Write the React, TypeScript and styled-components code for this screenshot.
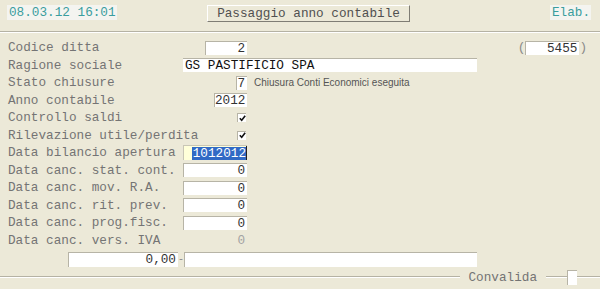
import { createGlobalStyle } from 'styled-components';
import styled from 'styled-components';

const GlobalStyle = createGlobalStyle`
  body {
    margin: 0;
    background: #ece9d8;
  }
`;

const MONO = `"Liberation Mono", "DejaVu Sans Mono", monospace`;

type RowData = {
  label: string;
  kind: 'box' | 'check' | 'plain' | 'wide' | 'selected';
  value?: string;
  width?: number;
  note?: string;
  side?: string;
};

const rows: RowData[] = [
  { label: 'Codice ditta', kind: 'box', value: '2', width: 42, side: '5455' },
  { label: 'Ragione sociale', kind: 'wide', value: 'GS PASTIFICIO SPA' },
  { label: 'Stato chiusure', kind: 'box', value: '7', width: 11, note: 'Chiusura Conti Economici eseguita' },
  { label: 'Anno contabile', kind: 'box', value: '2012', width: 33 },
  { label: 'Controllo saldi', kind: 'check' },
  { label: 'Rilevazione utile/perdita', kind: 'check' },
  { label: 'Data bilancio apertura', kind: 'selected', value: '1012012' },
  { label: 'Data canc. stat. cont.', kind: 'box', value: '0', width: 64 },
  { label: 'Data canc. mov. R.A.', kind: 'box', value: '0', width: 64 },
  { label: 'Data canc. rit. prev.', kind: 'box', value: '0', width: 64 },
  { label: 'Data canc. prog.fisc.', kind: 'box', value: '0', width: 64 },
  { label: 'Data canc. vers. IVA', kind: 'plain', value: '0' },
];

export default function App() {
  return (
    <>
      <GlobalStyle />
      <Page>
        <Header>
          <InfoBox>08.03.12 16:01</InfoBox>
          <TitleButton>Passaggio anno contabile</TitleButton>
          <InfoBox $gap={140} $w={41}>
            Elab.
          </InfoBox>
        </Header>
        <Rule />
        <Form>
          {rows.map((row) => (
            <Row key={row.label}>
              <Label>{row.label}</Label>
              {row.kind === 'wide' ? (
                <WideField>{row.value}</WideField>
              ) : (
                <FieldCell>
                  {row.kind === 'box' && <Box $w={row.width ?? 64}>{row.value}</Box>}
                  {row.kind === 'plain' && <PlainValue>{row.value}</PlainValue>}
                  {row.kind === 'check' && (
                    <CheckBox>
                      <svg width="7" height="7" viewBox="0 0 7 7">
                        <path d="M0.8 3.2 L2.7 5.2 L6.2 0.8" fill="none" stroke="#111" strokeWidth="1.6" />
                      </svg>
                    </CheckBox>
                  )}
                  {row.kind === 'selected' && (
                    <YellowBox>
                      <Selected>{row.value}</Selected>
                      <Caret />
                    </YellowBox>
                  )}
                </FieldCell>
              )}
              {row.note && <Note>{row.note}</Note>}
              {row.side && (
                <Side>
                  <Paren>(</Paren>
                  <Box $w={54}>{row.side}</Box>
                  <Paren>)</Paren>
                </Side>
              )}
            </Row>
          ))}
          <TotalRow>
            <Box $w={110} $h={15}>
              0,00
            </Box>
            <Dash>-</Dash>
            <Box $w={293} $h={15} />
          </TotalRow>
          <ConfirmRow>
            <Line $flex />
            <ConfirmLabel>Convalida</ConfirmLabel>
            <Line $w={21} />
            <ConfirmBox />
            <Line $w={23} />
          </ConfirmRow>
        </Form>
      </Page>
    </>
  );
}

const Page = styled.div`
  width: 600px;
  height: 289px;
  overflow: hidden;
  background: #ece9d8;
  font-family: ${MONO};
  font-size: 12.7px;
  color: #747474;
`;

const Header = styled.header`
  display: flex;
  align-items: flex-start;
  height: 31px;
  padding: 5px 0 0 7px;
  box-sizing: border-box;
`;

const InfoBox = styled.div<{ $gap?: number; $w?: number }>`
  width: ${({ $w }) => $w ?? 110}px;
  height: 15px;
  margin-left: ${({ $gap }) => $gap ?? 0}px;
  padding-left: 2px;
  box-sizing: border-box;
  background: #f4f4f0;
  color: #3a9d9e;
  line-height: 15px;
  white-space: nowrap;
`;

const TitleButton = styled.div`
  width: 203px;
  height: 17px;
  margin-left: 90px;
  box-sizing: border-box;
  border: 1px solid;
  border-color: #ffffff #7f7d74 #7f7d74 #ffffff;
  background: #ece9d8;
  color: #505050;
  text-align: center;
  line-height: 15px;
  white-space: nowrap;
`;

const Rule = styled.div`
  border-top: 1px solid #b5b2a4;
  border-bottom: 1px solid #ffffff;
`;

const Form = styled.div`
  padding-top: 6px;
`;

const Row = styled.div`
  display: grid;
  grid-template-columns: 175px 64px auto 1fr;
  align-items: center;
  height: 17.5px;
  padding-left: 8px;
`;

const Label = styled.div`
  white-space: nowrap;
  color: #747474;
`;

const FieldCell = styled.div`
  display: flex;
  justify-content: flex-end;
  align-items: center;
`;

const Box = styled.div<{ $w: number; $h?: number }>`
  width: ${({ $w }) => $w}px;
  height: ${({ $h }) => $h ?? 14}px;
  box-sizing: border-box;
  padding-right: 2px;
  background: #ffffff;
  border-top: 1px solid #b7b4a6;
  border-left: 1px solid #b7b4a6;
  color: #333333;
  text-align: right;
  line-height: 13px;
  white-space: nowrap;
`;

const WideField = styled.div`
  grid-column: 2 / 5;
  width: 294px;
  height: 14px;
  box-sizing: border-box;
  padding-left: 2px;
  background: #ffffff;
  border-top: 1px solid #b7b4a6;
  color: #111111;
  line-height: 13px;
  white-space: nowrap;
`;

const PlainValue = styled.div`
  padding-right: 2px;
  color: #a3a3a3;
`;

const CheckBox = styled.div`
  display: flex;
  align-items: center;
  justify-content: center;
  width: 9px;
  height: 9px;
  box-sizing: border-box;
  margin-right: 1px;
  background: #ffffff;
  border-top: 1px solid #b7b4a6;
  border-left: 1px solid #b7b4a6;
`;

const YellowBox = styled.div`
  display: flex;
  justify-content: flex-end;
  align-items: center;
  width: 64px;
  height: 15px;
  box-sizing: border-box;
  background: #ffffd9;
  border-top: 1px solid #c9c6b6;
  border-left: 1px solid #c9c6b6;
`;

const Selected = styled.span`
  background: #316ac5;
  color: #ffffff;
  line-height: 13px;
  padding-left: 1px;
`;

const Caret = styled.span`
  width: 1px;
  height: 14px;
  background: #222;
`;

const Note = styled.div`
  margin-left: 7px;
  font-family: "Liberation Sans", Arial, sans-serif;
  font-size: 10px;
  color: #555555;
  white-space: nowrap;
`;

const Side = styled.div`
  grid-column: 4;
  display: flex;
  justify-content: flex-end;
  align-items: center;
  padding-right: 13px;
`;

const Paren = styled.span`
  color: #8a8a8a;
`;

const TotalRow = styled.div`
  display: flex;
  align-items: center;
  height: 15px;
  margin-top: 3px;
  padding-left: 68px;
`;

const Dash = styled.span`
  width: 6px;
  color: #8a8a8a;
  font-size: 10px;
  text-align: left;
`;

const ConfirmRow = styled.div`
  display: flex;
  align-items: center;
  height: 18px;
  margin-top: 1px;
`;

const Line = styled.div<{ $flex?: boolean; $w?: number }>`
  ${({ $flex, $w }) => ($flex ? 'flex: 1;' : `width: ${$w}px;`)}
  border-top: 1px solid #b5b2a4;
  border-bottom: 1px solid #ffffff;
`;

const ConfirmLabel = styled.span`
  margin: 0 9px 0 8px;
  color: #747474;
  white-space: nowrap;
`;

const ConfirmBox = styled.div`
  width: 10px;
  height: 15px;
  box-sizing: border-box;
  background: #ffffff;
  border-top: 1px solid #b7b4a6;
  border-left: 1px solid #b7b4a6;
`;
